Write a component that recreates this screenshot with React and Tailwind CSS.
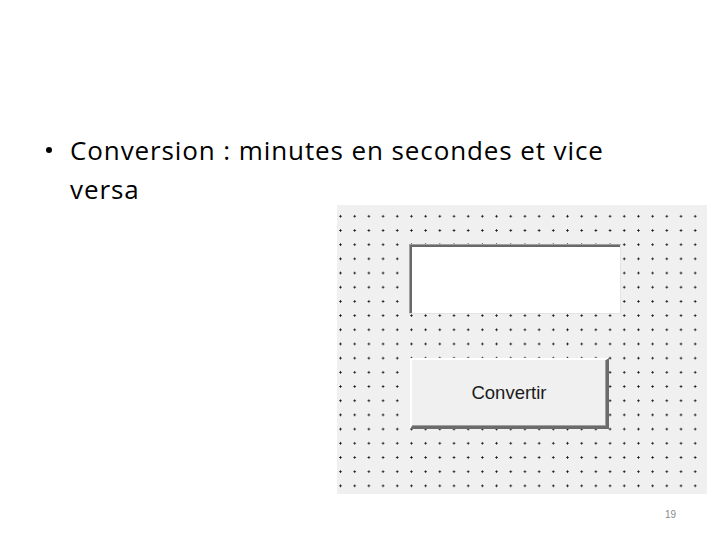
export default function App() {
  return (
    <div className="w-[720px] h-[540px] bg-white overflow-hidden font-['Open_Sans',sans-serif]">
      {/* bullet title */}
      <div className="pt-[131px] pl-[46px] flex items-start">
        <span className="mt-[16px] mr-[18px] w-[6px] h-[6px] rounded-full bg-black shrink-0" />
        <p className="text-[26px] leading-[39px] tracking-[0.9px] text-black whitespace-nowrap">
          Conversion : minutes en secondes et vice
          <br />
          versa
        </p>
      </div>

      {/* form designer panel */}
      <div className="ml-[337px] mt-[-4px] w-[370px] h-[289px] bg-[#f0f0f0] bg-[image:radial-gradient(circle,#111_0.9px,transparent_1.1px)] bg-[size:14.2px_14.2px] bg-[position:-3.6px_4.2px] flex flex-col pl-[72px] pt-[39px]">
        <div className="w-[212px] h-[70px] bg-white border-t border-l border-[#a0a0a0] border-r border-b border-r-[#e3e3e3] border-b-[#e3e3e3] shadow-[inset_2px_2px_0_#696969]" />
        <button
          type="button"
          className="mt-[44px] ml-[1px] w-[199px] h-[71px] bg-[#f0f0f0] border-t-2 border-l-2 border-white border-r-[3px] border-b-[3px] border-r-[#6b6b6b] border-b-[#6b6b6b] shadow-[inset_-1px_-1px_0_#a0a0a0] flex items-center justify-center text-[18.5px] text-[#1a1a1a] font-['Liberation_Sans',sans-serif]"
        >
          Convertir
        </button>
      </div>

      {/* page number */}
      <div className="flex justify-end pr-[44px] mt-[15px]">
        <span className="text-[10px] leading-[12px] text-[#8a8a8a] font-['Liberation_Sans',sans-serif]">19</span>
      </div>
    </div>
  );
}
